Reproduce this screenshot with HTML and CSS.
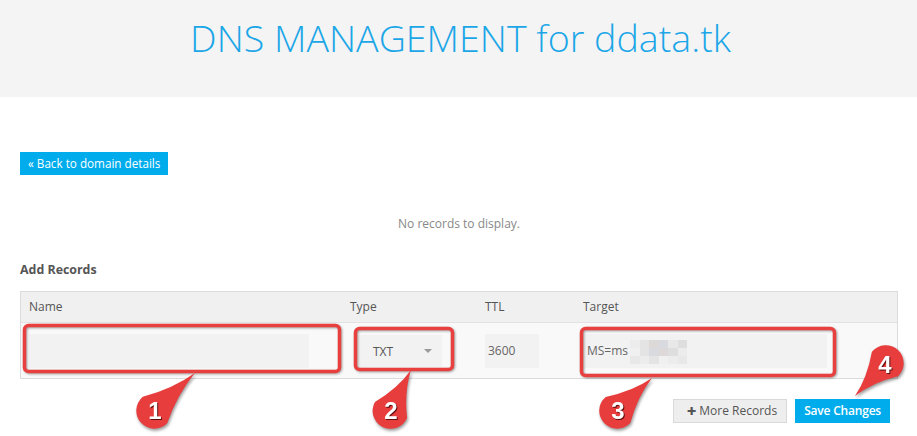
FILE: index.html
```html
<!DOCTYPE html>
<html lang="en">
<head>
<meta charset="utf-8">
<title>DNS Management</title>
<link rel="stylesheet" href="styles.css">
</head>
<body>
<header class="hero">
  <h1 class="hero-title">DNS MANAGEMENT for ddata.tk</h1>
</header>
<main class="content">
  <div class="back-row"><a class="btn btn-primary btn-back" href="#">« Back to domain details</a></div>
  <p class="empty">No records to display.</p>
  <h2 class="section-title">Add Records</h2>
  <div class="records">
    <div class="records-head">
      <div class="cell">Name</div>
      <div class="cell">Type</div>
      <div class="cell">TTL</div>
      <div class="cell">Target</div>
    </div>
    <div class="records-row">
      <div class="cell"><div class="field field-name"></div></div>
      <div class="cell"><div class="select"><span>TXT</span><span class="caret"></span></div></div>
      <div class="cell"><div class="field field-ttl">3600</div></div>
      <div class="cell"><div class="field field-target">MS=ms<span class="blur"><i class="b1"></i><i class="b2"></i><i class="b3"></i><i class="b4"></i><i class="b5"></i><i class="b6"></i><i class="b7"></i><i class="b2"></i><i class="b4"></i><i class="b3"></i><i class="b6"></i><i class="b1"></i><i class="b5"></i><i class="b1"></i><i class="b2"></i><i class="b7"></i><i class="b1"></i><i class="b5"></i></span></div></div>
    </div>
  </div>
  <div class="actions">
    <a class="btn btn-default" href="#"><span class="plus">✚</span> More Records</a>
    <a class="btn btn-primary btn-save" href="#">Save Changes</a>
  </div>
</main>
<svg class="annotations" width="917" height="436" viewBox="0 0 917 436" aria-hidden="true">
  <g class="boxes">
    <rect x="24.5" y="325.5" width="315" height="46" rx="4"/>
    <rect x="355.5" y="328.5" width="97" height="41" rx="4"/>
    <rect x="581.5" y="328.5" width="253" height="47" rx="4"/>
  </g>
  <g class="pins">
    <path d="M142.8,396.8 Q172.6,388.9 195,373 Q177.4,394.1 167.2,423.2 A18,18 0 1,1 142.8,396.8 Z"/>
    <path d="M374.9,402 Q397.8,388.4 411,370 Q404.2,391.6 407.1,418 A18,18 0 1,1 374.9,402 Z"/>
    <path d="M605.7,396.9 Q632.5,391.4 652,378 Q637.5,396.6 630.3,423.1 A18,18 0 1,1 605.7,396.9 Z"/>
    <path d="M898.1,376.3 Q872.6,382.5 855,396 Q867.4,377.5 871.9,351.7 A18,18 0 1,1 898.1,376.3 Z"/>
  </g>
  <g class="nums">
    <text x="155" y="418.5">1</text>
    <text x="391" y="418.5">2</text>
    <text x="618" y="418.5">3</text>
    <text x="885" y="372.5">4</text>
  </g>
</svg>
</body>
</html>
```
FILE: styles.css
```css
* { box-sizing: border-box; }
html, body { margin: 0; padding: 0; }
body {
  font-family: "Open Sans", "Liberation Sans", sans-serif;
  font-size: 12px;
  color: #555;
  background: #fff;
  width: 917px;
  height: 436px;
  overflow: hidden;
  position: relative;
}
.hero {
  height: 97px;
  background: #f4f4f4;
  padding-top: 12px;
}
.hero-title {
  margin: 0;
  text-align: center;
  font-weight: 300;
  font-size: 37.6px;
  line-height: 52px;
  color: #1ba6e8;
  padding-left: 4px;
}
.content {
  padding: 0 19px 0 20px;
}
.back-row {
  margin-top: 55px;
  display: flex;
}
.btn {
  display: inline-block;
  text-decoration: none;
  font-size: 12px;
  line-height: 24px;
  height: 24px;
  padding: 0 9px;
  white-space: nowrap;
}
.btn-primary {
  background: #00acec;
  color: #fff;
}
.btn-back {
  height: 23px;
  line-height: 23px;
  padding: 0 8px 0 8px;
  font-size: 11.7px;
}
.empty {
  margin: 40px 0 0;
  text-align: center;
  line-height: 18px;
  color: #888;
}
.section-title {
  margin: 28px 0 0;
  font-size: 12.4px;
  font-weight: 700;
  line-height: 18px;
  color: #555;
}
.records {
  margin-top: 12px;
  border: 1px solid #dcdcdc;
}
.records-head, .records-row {
  display: grid;
  grid-template-columns: 321px 135px 98px 1fr;
}
.records-head {
  background: #f0f0f0;
  border-bottom: 1px solid #e2e2e2;
}
.records-head .cell {
  padding: 6px 8px;
  line-height: 18px;
  color: #555;
}
.records-row {
  background: #f9f9f9;
}
.records-row .cell {
  padding: 11px 8px 10px;
  display: flex;
  align-items: center;
}
.field {
  height: 34px;
  background: #f2f2f2;
  line-height: 34px;
  padding: 0 3px;
  color: #666;
  display: flex;
  align-items: center;
}
.field-name { width: 280px; }
.field-ttl { width: 54px; }
.field-target { width: 244px; padding: 0 4px; }
.blur {
  display: inline-grid;
  grid-template-columns: repeat(6, 9.5px);
  grid-auto-rows: 8px;
  margin-left: 2px;
  margin-top: 2px;
}
.blur i { display: block; }
.b1 { background: #ececec; }
.b2 { background: #e4e4e4; }
.b3 { background: #dcd9d8; }
.b4 { background: #d9dadf; }
.b5 { background: #e8e8e8; }
.b6 { background: #dedede; }
.b7 { background: #f0f0f0; }
.select {
  margin-left: 8px;
  width: 84px;
  height: 32px;
  background: #f2f2f2;
  display: flex;
  align-items: center;
  justify-content: space-between;
  padding: 0 10px 0 15px;
  color: #555;
}
.caret {
  width: 0;
  height: 0;
  border-left: 4px solid transparent;
  border-right: 4px solid transparent;
  border-top: 4px solid #9a9a9a;
}
.actions {
  display: flex;
  justify-content: flex-end;
  gap: 8px;
  margin-top: 20px;
  padding-right: 8px;
}
.btn-default {
  background: #eeeeee;
  border: 1px solid #d9d9d9;
  line-height: 22px;
  color: #555;
  padding: 0 9px 0 13px;
}
.btn-save { font-weight: 600; padding: 0 9px; letter-spacing: -0.2px; }
.plus { font-size: 11px; color: #555; }
.annotations {
  position: absolute;
  left: 0;
  top: 0;
  pointer-events: none;
}
.boxes rect {
  fill: none;
  stroke: #e8403f;
  stroke-width: 3.5;
  filter: drop-shadow(1px 1.5px 1px rgba(0,0,0,0.35));
}
.pins path {
  fill: #e83d3d;
  filter: drop-shadow(1px 2px 1.5px rgba(0,0,0,0.4));
}
.nums text {
  fill: #fff;
  font-family: "Liberation Sans", Arial, sans-serif;
  font-weight: 700;
  font-size: 24px;
  text-anchor: middle;
  paint-order: stroke;
  filter: drop-shadow(1px 1px 0 rgba(60,0,0,0.8));
}
```
